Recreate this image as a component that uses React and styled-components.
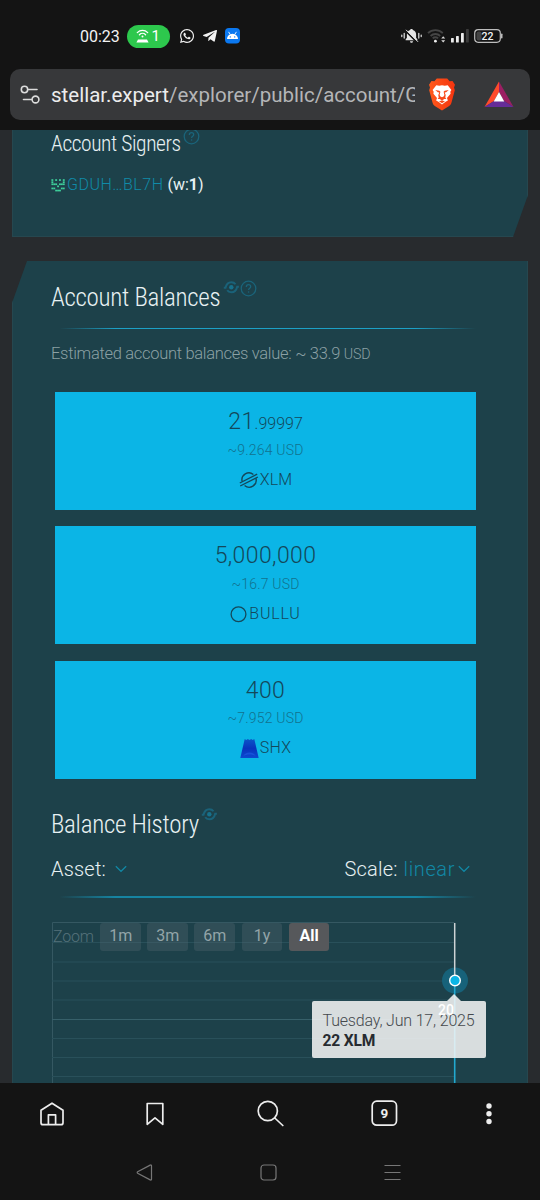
import React from "react";
import styled, { createGlobalStyle } from "styled-components";
import { FaWhatsapp, FaTelegramPlane } from "react-icons/fa";

const GlobalStyle = createGlobalStyle`
    * {
        box-sizing: border-box;
    }
    body {
        margin: 0;
        background: #141414;
        font-family: "Roboto", "Liberation Sans", sans-serif;
        font-weight: 300;
        color: #e8f1f3;
    }
    svg {
        display: block;
        flex-shrink: 0;
    }
`;

const Phone = styled.div`
    display: flex;
    flex-direction: column;
    width: 540px;
    height: 1200px;
    overflow: hidden;
    background: #141414;
`;

const StatusBar = styled.div`
    display: flex;
    align-items: center;
    justify-content: space-between;
    height: 69px;
    padding: 3px 37px 0 80px;
    color: #f2f2f2;
`;

const StatusGroup = styled.div`
    display: flex;
    align-items: center;
    gap: ${props => props.gap}px;
`;

const Clock = styled.span`
    width: 41px;
    font-size: 16px;
    font-weight: 450;
    white-space: nowrap;
`;

const Hotspot = styled.span`
    display: flex;
    align-items: center;
    justify-content: space-between;
    width: 43px;
    height: 23px;
    margin: 0 2px 0 -1px;
    padding: 0 10px 0 9px;
    border-radius: 12px;
    background: #2dc84d;
    color: #ffffff;
    font-size: 15px;
    font-weight: 400;
`;

const AddressBar = styled.div`
    display: flex;
    align-items: center;
    height: 51px;
    margin: 0 10px 10px;
    padding: 0 16px 0 10px;
    border-radius: 10px;
    background: #37383a;
`;

const Url = styled.div`
    width: 364px;
    margin: 1px 13px 0 11px;
    overflow: hidden;
    font-size: 20.5px;
    font-weight: 400;
    line-height: 28px;
    white-space: nowrap;
    color: #b4b5b7;
`;

const Domain = styled.span`
    color: #ececed;
`;

const Rewards = styled.span`
    margin-left: 28px;
`;

const Content = styled.main`
    height: 953px;
    overflow: hidden;
    padding: 0 12px;
    background: #282b2e;
`;

const Panel = styled.section`
    height: ${props => props.height}px;
    padding: ${props => props.top}px 47px 0 38px;
    border: 1px solid #26474f;
    border-top-width: 0;
    background: #1d414a;
    clip-path: ${props =>
        props.cut === "bottom"
            ? "polygon(0 0, 100% 0, 100% 65px, calc(100% - 15px) 100%, 0 100%)"
            : "polygon(15px 0, 100% 0, 100% 100%, 0 100%, 0 42px)"};
`;

const Gap = styled.div`
    height: 24px;
`;

const Title = styled.h3`
    display: flex;
    align-items: flex-start;
    height: ${props => (props.small ? 26 : 30)}px;
    margin: 0;
    font-family: "Roboto Condensed", "Roboto", sans-serif;
    font-size: ${props => (props.small ? 21.5 : 25)}px;
    font-weight: 300;
    line-height: ${props => (props.small ? 26 : 30)}px;
    letter-spacing: ${props => (props.small ? -0.42 : -0.28)}px;
    white-space: nowrap;

    svg {
        margin-top: -3px;
    }
    svg:first-of-type {
        margin-left: 2.5px;
    }
`;

const Signer = styled.div`
    display: flex;
    align-items: center;
    height: 20px;
    margin-top: 18px;
    font-size: 16px;
    font-weight: 400;
    line-height: 20px;
    white-space: pre;
`;

const AccountLink = styled.a`
    margin-left: 2px;
    color: #108ba8;
    font-weight: 300;
    letter-spacing: 0.5px;
`;

const Divider = styled.hr`
    height: ${props => (props.thick ? 2 : 1)}px;
    margin: ${props => (props.thick ? "14px 0 24px" : "15px 0")};
    border: 0;
    background: linear-gradient(
        to right,
        transparent 2%,
        ${props => (props.thick ? "#1684a2" : "#1ca0c6")} 15%,
        ${props => (props.thick ? "#1684a2" : "#1ca0c6")} 85%,
        transparent 99%
    );
`;

const Estimate = styled.div`
    height: 20px;
    font-size: 16.5px;
    line-height: 20px;
    letter-spacing: -0.3px;
    color: #8ba0a4;
    white-space: nowrap;

    small {
        font-size: 14.2px;
        letter-spacing: -0.1px;
    }
`;

const Balances = styled.div`
    display: flex;
    flex-direction: column;
    gap: 16.7px;
    margin: 28px 0 31px;
    padding: 0 4px;
`;

const BalanceCard = styled.div`
    display: flex;
    flex-direction: column;
    align-items: center;
    height: 117.8px;
    padding-top: 16px;
    background: #0bb5e6;
    color: #14485a;
`;

const Amount = styled.div`
    height: 28px;
    font-size: 23px;
    line-height: 28px;
    letter-spacing: 0.4px;

    small {
        font-size: 16px;
        line-height: 1;
        letter-spacing: 0;
    }
`;

const Value = styled.div`
    height: 18px;
    margin-top: 4.5px;
    font-size: 14px;
    line-height: 18px;
    letter-spacing: 0.2px;
    color: #12728f;
`;

const Asset = styled.div`
    display: flex;
    align-items: center;
    gap: 1px;
    height: 20px;
    margin-top: 11px;
    font-size: 16px;
    line-height: 20px;
    letter-spacing: ${props => (props.wide ? 0.8 : 0.2)}px;
`;

const Selectors = styled.div`
    display: flex;
    justify-content: space-between;
    height: 26px;
    margin-top: 16px;
    padding-right: 10px;
    font-size: 20px;
    font-weight: 350;
    line-height: 26px;
`;

const Selector = styled.div`
    display: flex;
    align-items: center;
    letter-spacing: 0.2px;
`;

const Choice = styled.span`
    display: flex;
    align-items: center;
    gap: 3px;
    margin-left: ${props => props.offset}px;
    color: #1188a5;
    font-weight: 300;
    letter-spacing: 0.6px;
`;

const Chart = styled.div`
    position: relative;
    height: 161px;
    padding: 1px 0 0 2px;
`;

const Plot = styled.svg`
    position: absolute;
    top: 0;
    left: 0;
`;

const RangeBar = styled.div`
    position: relative;
    display: flex;
    gap: 6.3px;
    font-size: 16px;
`;

const RangeLabel = styled.span`
    width: 41px;
    line-height: 28px;
    letter-spacing: -0.2px;
    color: #55717a;
`;

const RangeButton = styled.button`
    width: 40.8px;
    height: 28px;
    padding: 0 0 2px;
    border: 0;
    border-radius: 3px;
    background: ${props => (props.active ? "#56585b" : "rgba(86, 106, 114, 0.34)")};
    color: ${props => (props.active ? "#ffffff" : "#93a4a8")};
    font-family: inherit;
    font-size: 16px;
    font-weight: ${props => (props.active ? 700 : 400)};
`;

const Tooltip = styled.div`
    position: absolute;
    top: 79px;
    left: 261px;
    width: 174px;
    height: 57px;
    padding: 10px 0 0 10.5px;
    border-radius: 2px;
    background: rgba(247, 247, 247, 0.86);
    color: #45494d;
    font-size: 16px;
    line-height: 20px;
    letter-spacing: -0.17px;
    white-space: nowrap;

    &::before {
        content: "";
        position: absolute;
        top: -7px;
        left: 135px;
        border: 7.5px solid transparent;
        border-top: 0;
        border-bottom: 7px solid rgba(247, 247, 247, 0.86);
    }
`;

const TooltipValue = styled.div`
    color: #272b30;
    font-size: 15.6px;
    font-weight: 700;
`;

const AxisLabel = styled.span`
    position: absolute;
    top: 80px;
    left: 387px;
    font-size: 14px;
    font-weight: 500;
    color: #ffffff;
`;

const Toolbar = styled.div`
    display: grid;
    grid-template-columns: 103px 104px 126px 103px 105px;
    align-items: center;
    justify-items: center;
    height: 61px;
    color: #ededed;
`;

const SystemNav = styled.div`
    display: grid;
    grid-template-columns: repeat(3, 124px);
    align-items: center;
    justify-items: center;
    height: 56px;
    padding-left: 82.5px;
    color: #777777;
`;

const HotspotIcon = () => (
    <svg width="13" height="14" viewBox="0 0 13 14" fill="none" stroke="#fff" strokeWidth="1.3" strokeLinecap="round">
        <path d="M1.3 3.6a7.4 7.4 0 0 1 10.4 0M3.4 5.700a4.400 4.400 0 0 1 6.200 0" />
        <circle cx="6.5" cy="7.6" r="1" fill="#fff" stroke="none" />
        <path d="M2 10.400h9l1.600 3.200H.4z" fill="#fff" stroke="none" />
    </svg>
);

const AndroidIcon = () => (
    <svg width="15" height="16" viewBox="0 0 15 16">
        <rect width="15" height="15.5" rx="4" fill="#0b78f0" />
        <path d="M2 11a5.5 5.2 0 0 1 11 0z" fill="#fff" />
        <path d="M3.8 4.2l1.4 2.2M11.2 4.2L9.8 6.4" stroke="#fff" strokeWidth=".9" strokeLinecap="round" />
        <circle cx="5.3" cy="8.9" r=".7" fill="#0b78f0" />
        <circle cx="9.7" cy="8.9" r=".7" fill="#0b78f0" />
    </svg>
);

const MutedBellIcon = () => (
    <svg width="21" height="16" viewBox="0 0 21 16" fill="#e4e4e4">
        <path d="M10.5 1c.9 0 1.3.5 1.4 1.1 2.2.6 3.2 2.3 3.2 4.5v3.1l1.3 1.7v.9H4.6v-.9l1.3-1.7V6.6c0-2.2 1-3.9 3.2-4.5C9.2 1.5 9.6 1 10.5 1z" />
        <path d="M9 13.2h3c-.2 1-.7 1.5-1.5 1.5S9.2 14.2 9 13.2z" />
        <path d="M4.300 2.600l12 12" stroke="#141414" strokeWidth="1.500" />
        <path d="M5 1.800l12 12" stroke="#e4e4e4" strokeWidth="1" />
        <path d="M.8 7v1.600M3.200 5.300v4.800M17.800 5.300v4.800M20.200 7v1.600" stroke="#e4e4e4" strokeWidth="1.200" strokeLinecap="round" />
    </svg>
);

const WifiIcon = () => (
    <svg width="19" height="16" viewBox="0 0 19 16" fill="none" strokeWidth="1.8">
        <path d="M1 5.2a10.5 10.5 0 0 1 14.8 0M3.6 8a6.8 6.8 0 0 1 9.6 0" stroke="#454545" />
        <path d="M5.7 10.4a3.8 3.8 0 0 1 5.4 0" stroke="#454545" />
        <circle cx="8.4" cy="13.2" r="1.4" fill="#eee" />
        <path d="M14.2 10.5l2-2.2 2 2.2zM14.2 12.2l2 2.2 2-2.2z" fill="#ddd" />
    </svg>
);

const SignalIcon = () => (
    <svg width="18" height="14" viewBox="0 0 18 14" fill="#ececec">
        <rect x="0" y="9" width="2.8" height="4.5" rx=".6" />
        <rect x="5" y="7" width="2.8" height="6.5" rx=".6" />
        <rect x="10" y="4" width="2.8" height="9.5" rx=".6" />
        <rect x="15" y="0" width="2.8" height="13.5" rx=".6" fill="#3b3b3b" />
    </svg>
);

const BatteryIcon = () => (
    <svg width="29" height="14" viewBox="0 0 29 14">
        <rect x=".7" y=".7" width="25.6" height="12.6" rx="3.5" fill="none" stroke="#bdbdbd" strokeWidth="1.2" />
        <rect x="2.5" y="2.5" width="5" height="9" rx="2" fill="#444" />
        <rect x="27" y="4.5" width="1.5" height="5" rx=".7" fill="#bdbdbd" />
        <text x="13.5" y="10.7" textAnchor="middle" fontSize="10.5" fontWeight="500" fill="#f2f2f2">22</text>
    </svg>
);

const SettingsIcon = () => (
    <svg width="20" height="20" viewBox="0 0 20 20" fill="none" stroke="#dcdcdc" strokeWidth="1.6" strokeLinecap="round">
        <circle cx="4.5" cy="4.5" r="3.2" />
        <path d="M8.5 4.5h8.5M3.5 14.5h8" />
        <circle cx="15.5" cy="14.5" r="3.4" />
    </svg>
);

const BraveIcon = () => (
    <svg width="28" height="33" viewBox="0 0 28 33">
        <defs>
            <linearGradient id="brave" x1="0" x2="1">
                <stop offset="0" stopColor="#ff5a1c" />
                <stop offset="1" stopColor="#f5340f" />
            </linearGradient>
        </defs>
        <path
            d="M8.8.6h10.4l2.4 2.7 2.9-.3 2.5 3.8-1 2.8.8 2.7-3.3 12.1c-.5 1.7-1.3 2.800-2.700 3.800L14 32.600l-6.800-4.400c-1.400-1-2.200-2.100-2.700-3.800L1.200 12.300 2 9.600 1 6.800 3.500 3l2.900.3z"
            fill="url(#brave)"
        />
        <path
            d="M8.300 7.300l2.900.5 2.800-.5 2.800.5 2.900-.5 3.700 4.600-1.100 1.900.3 2-3.600 4.200.9 2.600-2.300 1.200-3.600 2.800-3.600-2.800-2.300-1.200.9-2.600-3.600-4.200.3-2-1.100-1.900z"
            fill="#fff"
        />
        <path
            d="M7.300 12l4 .8 1.100 1-.8 3.300.8 1.400 1.600.8 1.600-.8.8-1.400-.8-3.300 1.100-1 4-.8-2.500 2.200-1.500.2 1 2.600-.4 2.600 1 1.300-2 .2L14 22.600l-2.300-1.500-2-.2 1-1.300-.4-2.600 1-2.600-1.500-.2zM11 23.200l3-.6 3 .6-3 2z"
            fill="#f74a1b"
        />
    </svg>
);

const BatIcon = () => (
    <svg width="30" height="27" viewBox="0 0 30 27">
        <path d="M15 .5L.5 26 10 20l5-9z" fill="#ff4a2b" />
        <path d="M15 .5L29.5 26 20 20l-5-9z" fill="#9b1f63" />
        <path d="M.5 26h29L20 20H10z" fill="#652c98" />
        <path d="M15 11l5.3 9.5H9.700z" fill="#fff" />
    </svg>
);

const HelpIcon = () => (
    <svg width="17" height="17" viewBox="0 0 17 17" fill="none" stroke="#1a647a" strokeWidth="1.3">
        <circle cx="8.5" cy="8.5" r="7.3" />
        <path d="M6.3 7c0-1.5.9-2.3 2.2-2.3s2.2.8 2.2 2c0 1.500-2.100 1.600-2.100 3.200" />
        <circle cx="8.6" cy="12" r=".8" fill="#1a647a" stroke="none" />
    </svg>
);

const WatchIcon = () => (
    <svg width="17" height="17" viewBox="0 0 17 17" fill="none" stroke="#1a6279" strokeWidth="2">
        <circle cx="8.3" cy="7.3" r="2.200" fill="#17718c" stroke="none" />
        <path d="M.8 7.800h1.700C3.400 4 5.400 2.300 8.300 2.300c2 0 3.300.7 4.200 2" />
        <path d="M15.900 6.800h-1.700c-.9 3.800-2.900 5.500-5.800 5.500-2 0-3.300-.7-4.200-2" />
    </svg>
);

const identiconRows = ["1010101", "1000001", "1110111", "0001000", "1100011", "0011100"];

const Identicon = () => (
    <svg width="14" height="13" viewBox="0 0 14 13" fill="#3ecf9b">
        {identiconRows.map((row, y) =>
            row.split("").map((cell, x) => (
                cell === "1" && <rect key={`${x}-${y}`} x={x * 1.9 + 0.4} y={y * 2.1 + 0.2} width="1.9" height="1.7" />
            ))
        )}
    </svg>
);

const StellarIcon = () => (
    <svg width="20" height="18" viewBox="0 0 20 18" fill="none" stroke="#14485a" strokeWidth="1.4">
        <path d="M3.100 10.400A7 7 0 0 1 14.400 3.500M16.900 7.300A7 7 0 0 1 5.600 14.500" />
        <path d="M.8 12L18.200 3.200M1.200 15L18.900 6" />
    </svg>
);

const CircleIcon = () => (
    <svg width="18" height="18" viewBox="0 0 18 18" fill="none" stroke="#14485a" strokeWidth="1.3">
        <circle cx="8.5" cy="9.3" r="7.4" />
    </svg>
);

const ShxIcon = () => (
    <svg width="19" height="19" viewBox="0 0 19 19">
        <defs>
            <linearGradient id="shx" x1="0" y1="0" x2="0" y2="1">
                <stop offset="0" stopColor="#0b55c8" />
                <stop offset=".5" stopColor="#0833bd" />
                <stop offset="1" stopColor="#0b49d0" />
            </linearGradient>
        </defs>
        <path d="M4.7 0l1.6 1L7.8 0l1.7 1 1.7-1 1.5 1 1.6-1 4.4 19H.3z" fill="url(#shx)" />
        <path d="M3.5 17c1.2-4.8 10.8-4.8 12 0-3.2-2-8.8-2-12 0z" fill="#1b5ae0" opacity=".7" />
    </svg>
);

const Chevron = () => (
    <svg width="12" height="8" viewBox="0 0 12 8" fill="none" stroke="#1188a5" strokeWidth="1.2">
        <path d="M.8 1.3L6 6.3l5.2-5" />
    </svg>
);

const HomeIcon = () => (
    <svg width="24" height="24" viewBox="0 0 24 24" fill="none" stroke="currentColor" strokeWidth="1.7" strokeLinejoin="round">
        <path d="M1 8.3L12 1.2l11 7.1v12.4a2 2 0 0 1-2 2H3a2 2 0 0 1-2-2z" />
        <path d="M8.4 22.5v-9.7h7.2v9.7" />
    </svg>
);

const BookmarkIcon = () => (
    <svg width="18" height="24" viewBox="0 0 18 24" fill="none" stroke="currentColor" strokeWidth="1.7" strokeLinejoin="round">
        <path d="M1.2 1.5h15.6v20.8L9 15.8l-7.8 6.5z" />
    </svg>
);

const SearchIcon = () => (
    <svg width="27" height="27" viewBox="0 0 27 27" fill="none" stroke="currentColor" strokeWidth="1.7" strokeLinecap="round">
        <circle cx="10.8" cy="11" r="9.6" />
        <path d="M17.8 18l8 7.500" />
    </svg>
);

const TabsIcon = () => (
    <svg width="27" height="27" viewBox="0 0 27 27">
        <rect x="1.2" y="1.2" width="24.3" height="24" rx="4.5" fill="none" stroke="currentColor" strokeWidth="1.7" />
        <text x="13.4" y="18" textAnchor="middle" fontSize="13.5" fontWeight="700" fill="currentColor">9</text>
    </svg>
);

const MoreIcon = () => (
    <svg width="6" height="22" viewBox="0 0 6 22" fill="currentColor">
        <circle cx="3" cy="3" r="2.7" />
        <circle cx="3" cy="10.7" r="2.7" />
        <circle cx="3" cy="18.5" r="2.7" />
    </svg>
);

const NavIcon = ({ d }) => (
    <svg width="17" height="17" viewBox="0 0 17 17" fill="none" stroke="currentColor" strokeWidth="1.2" strokeLinejoin="round">
        <path d={d} />
    </svg>
);

const gridLines = [20.5, 40, 59, 78, 97.5, 116.5, 135.5, 154.5];

const BalancePlot = () => (
    <Plot width="436" height="161" viewBox="0 0 436 161">
        <path d="M1.5 161V.5h402" fill="none" stroke="#355862" />
        {gridLines.map(y => (
            <path key={y} d={`M1 ${y}h402`} stroke={y === 97.5 ? "#37606a" : "#29505a"} />
        ))}
        <circle cx="404" cy="58.5" r="13" fill="#17627a" />
        <path d="M403.7 1v52" stroke="#cdd3d5" strokeWidth="1.5" />
        <path d="M403.7 64v97" stroke="#22a9cf" strokeWidth="1.6" />
        <circle cx="404" cy="58.5" r="5.3" fill="#0bb5e6" stroke="#fff" strokeWidth="1.4" />
    </Plot>
);

const ranges = ["1m", "3m", "6m", "1y", "All"];

const balances = [
    { whole: "21", fraction: ".99997", value: "~9.264 USD", code: "XLM", icon: <StellarIcon /> },
    { whole: "5,000,000", value: "~16.7 USD", code: "BULLU", icon: <CircleIcon /> },
    { whole: "400", value: "~7.952 USD", code: "SHX", icon: <ShxIcon /> }
];

const Balance = ({ whole, fraction, value, code, icon }) => (
    <BalanceCard>
        <Amount>
            {whole}
            {fraction && <small>{fraction}</small>}
        </Amount>
        <Value>{value}</Value>
        <Asset wide={code === "BULLU" ? 1 : 0}>
            {icon}
            {code}
        </Asset>
    </BalanceCard>
);

const App = () => (
    <Phone>
        <GlobalStyle />
        <StatusBar>
            <StatusGroup gap={7}>
                <Clock>00:23</Clock>
                <Hotspot><HotspotIcon />1</Hotspot>
                <FaWhatsapp size={16} />
                <FaTelegramPlane size={16} />
                <AndroidIcon />
            </StatusGroup>
            <StatusGroup gap={5}>
                <MutedBellIcon />
                <WifiIcon />
                <SignalIcon />
                <BatteryIcon />
            </StatusGroup>
        </StatusBar>
        <AddressBar>
            <SettingsIcon />
            <Url><Domain>stellar.expert</Domain>/explorer/public/account/G</Url>
            <BraveIcon />
            <Rewards><BatIcon /></Rewards>
        </AddressBar>
        <Content>
            <Panel height={107} top={1} cut="bottom">
                <Title small>Account Signers<HelpIcon /></Title>
                <Signer>
                    <Identicon />
                    <AccountLink>GDUH…BL7H</AccountLink> (w:<b>1</b>)
                </Signer>
            </Panel>
            <Gap />
            <Panel height={830} top={22} cut="top">
                <Title>Account Balances<WatchIcon /><HelpIcon /></Title>
                <Divider />
                <Estimate>Estimated account balances value: ~ 33.9 <small>USD</small></Estimate>
                <Balances>
                    {balances.map(item => <Balance key={item.code} {...item} />)}
                </Balances>
                <Title>Balance History<WatchIcon /></Title>
                <Selectors>
                    <Selector>Asset:<Choice offset={9}><Chevron /></Choice></Selector>
                    <Selector>Scale:<Choice offset={6}>linear<Chevron /></Choice></Selector>
                </Selectors>
                <Divider thick />
                <Chart>
                    <BalancePlot />
                    <RangeBar>
                        <RangeLabel>Zoom</RangeLabel>
                        {ranges.map(range => (
                            <RangeButton key={range} active={range === "All" ? 1 : 0}>{range}</RangeButton>
                        ))}
                    </RangeBar>
                    <Tooltip>
                        Tuesday, Jun 17, 2025
                        <TooltipValue>22 XLM</TooltipValue>
                    </Tooltip>
                    <AxisLabel>20</AxisLabel>
                </Chart>
            </Panel>
        </Content>
        <Toolbar>
            <HomeIcon />
            <BookmarkIcon />
            <SearchIcon />
            <TabsIcon />
            <MoreIcon />
        </Toolbar>
        <SystemNav>
            <NavIcon d="M15.5 1.8v13.4a.8.8 0 0 1-1.3.7L1.6 9.2a.8.8 0 0 1 0-1.400l12.600-6.700a.8.8 0 0 1 1.300.7z" />
            <NavIcon d="M4 1h9a3 3 0 0 1 3 3v9a3 3 0 0 1-3 3H4a3 3 0 0 1-3-3V4a3 3 0 0 1 3-3z" />
            <NavIcon d="M.5 1.5h16M.5 8.5h16M.5 15.5h16" />
        </SystemNav>
    </Phone>
);

export default App;
